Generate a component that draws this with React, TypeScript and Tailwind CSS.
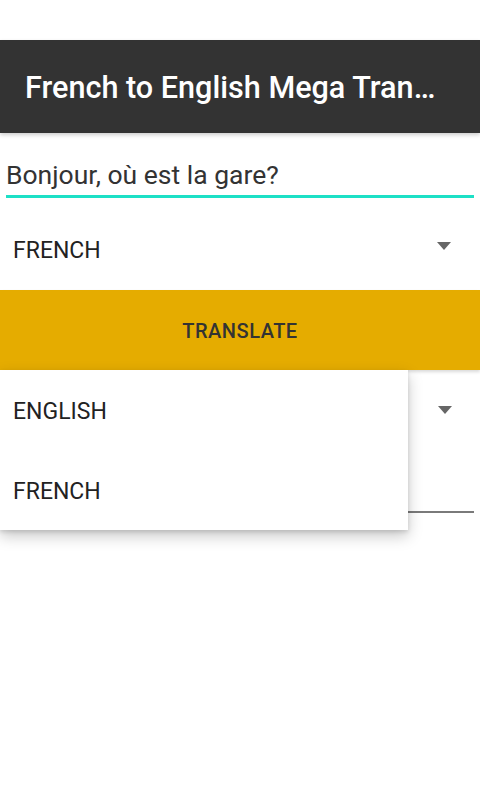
const Arrow = () => (
  <svg width="14" height="8" viewBox="0 0 14 8" className="shrink-0">
    <path d="M0 0 L14 0 L7 8 Z" fill="#666666" />
  </svg>
);

const App = () => {
  return (
    <div
      className="w-[480px] h-[800px] bg-white relative overflow-hidden"
      style={{ fontFamily: "Roboto, 'Liberation Sans', sans-serif" }}
    >
      <div className="h-10 bg-white" />
      <div className="h-[93px] bg-[#333333] flex items-center pl-[25px] pt-[3px] shadow-[0_2px_4px_rgba(0,0,0,0.2)] relative z-10">
        <h1 className="text-white text-[30.6px] font-medium whitespace-nowrap">
          French to English Mega Tran…
        </h1>
      </div>

      <div className="px-[6px] pt-[25px]">
        <div className="text-[26.5px] text-[#333333] leading-[34px]">Bonjour, où est la gare?</div>
        <div className="h-[3px] bg-[#1de0c6] mt-[3px]" />
      </div>

      <div className="h-[92px] flex items-center justify-between pl-[13px] pr-[29px] pt-[14px]">
        <span className="text-[23px] text-[#222222]">FRENCH</span>
        <span className="-mt-[10px]"><Arrow /></span>
      </div>

      <button className="w-full h-[80px] bg-[#e5ac00] flex items-center justify-center pt-[1px] text-[20px] text-[#333333] font-medium tracking-[0.5px] shadow-[0_2px_3px_rgba(0,0,0,0.15)]">
        TRANSLATE
      </button>

      <div className="h-[80px] flex items-center justify-end pr-[28px]">
        <Arrow />
      </div>
      <div className="h-[63px] flex items-end justify-end px-[6px]">
        <div className="w-full h-[2px] bg-[#7a7a7a]" />
      </div>

      <div className="absolute left-0 top-[370px] w-[408px] bg-white shadow-[0_6px_14px_rgba(0,0,0,0.22),0_2px_4px_rgba(0,0,0,0.12)] z-20">
        <div className="h-[80px] flex items-center pl-[13px] pt-[4px] text-[23px] text-[#222222]">ENGLISH</div>
        <div className="h-[80px] flex items-center pl-[13px] pt-[4px] text-[23px] text-[#222222]">FRENCH</div>
      </div>
    </div>
  );
};

export default App;
